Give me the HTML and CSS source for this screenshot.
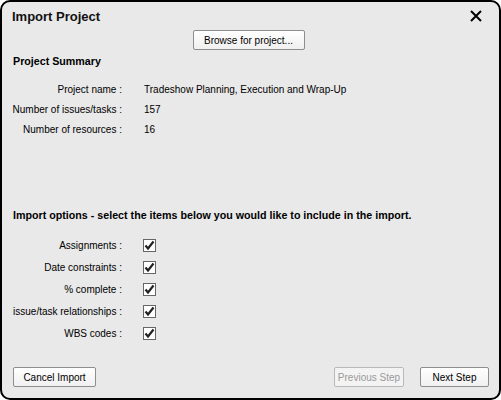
FILE: index.html
```html
<!DOCTYPE html>
<html>
<head>
<meta charset="utf-8">
<link rel="stylesheet" href="styles.css">
</head>
<body>
<div class="dialog">
  <div class="header">
    <div class="title">Import Project</div>
    <svg class="close" width="12" height="12" viewBox="0 0 12 12"><path d="M1 1L11 11M11 1L1 11" stroke="#000" stroke-width="2" fill="none"/></svg>
  </div>
  <div class="browse-row"><button class="btn browse">Browse for project...</button></div>
  <div class="section-title">Project Summary</div>
  <div class="rows">
    <div class="row"><span class="label">Project name :</span><span class="value">Tradeshow Planning, Execution and Wrap-Up</span></div>
    <div class="row"><span class="label">Number of issues/tasks :</span><span class="value">157</span></div>
    <div class="row"><span class="label">Number of resources :</span><span class="value">16</span></div>
  </div>
  <div class="section-title options-title">Import options - select the items below you would like to include in the import.</div>
  <div class="checks">
    <div class="crow"><span class="label">Assignments :</span><span class="cb"><svg width="11" height="11" viewBox="0 0 11 11"><path d="M1.5 5.5L4 8.5L9.5 1.5" stroke="#222" stroke-width="2.2" fill="none"/></svg></span></div>
    <div class="crow"><span class="label">Date constraints :</span><span class="cb"><svg width="11" height="11" viewBox="0 0 11 11"><path d="M1.5 5.5L4 8.5L9.5 1.5" stroke="#222" stroke-width="2.2" fill="none"/></svg></span></div>
    <div class="crow"><span class="label">% complete :</span><span class="cb"><svg width="11" height="11" viewBox="0 0 11 11"><path d="M1.5 5.5L4 8.5L9.5 1.5" stroke="#222" stroke-width="2.2" fill="none"/></svg></span></div>
    <div class="crow"><span class="label">issue/task relationships :</span><span class="cb"><svg width="11" height="11" viewBox="0 0 11 11"><path d="M1.5 5.5L4 8.5L9.5 1.5" stroke="#222" stroke-width="2.2" fill="none"/></svg></span></div>
    <div class="crow"><span class="label">WBS codes :</span><span class="cb"><svg width="11" height="11" viewBox="0 0 11 11"><path d="M1.5 5.5L4 8.5L9.5 1.5" stroke="#222" stroke-width="2.2" fill="none"/></svg></span></div>
  </div>
  <div class="footer">
    <button class="btn cancel">Cancel Import</button>
    <div class="nav">
      <button class="btn prev" disabled>Previous Step</button>
      <button class="btn next">Next Step</button>
    </div>
  </div>
</div>
</body>
</html>
```
FILE: styles.css
```css
html, body {
  margin: 0;
  padding: 0;
  background: #ffffff;
}
body {
  font-family: "Liberation Sans", Arial, sans-serif;
  font-size: 10px;
  color: #000;
}
.dialog {
  width: 501px;
  height: 400px;
  box-sizing: border-box;
  border: 2px solid #000;
  border-radius: 10px;
  background: #e9e9e9;
  display: flex;
  flex-direction: column;
}
.header {
  height: 28px;
  display: flex;
  align-items: center;
  justify-content: space-between;
  padding: 0 17px 0 10px;
}
.title {
  font-weight: bold;
  font-size: 13px;
  color: #111;
}
.close {
  display: block;
}
.browse-row {
  display: flex;
  justify-content: center;
  padding-right: 4px;
}
.btn {
  font-family: "Liberation Sans", Arial, sans-serif;
  font-size: 10px;
  color: #000;
  height: 20px;
  padding: 0;
  white-space: nowrap;
  background: linear-gradient(#ffffff, #f0f0f0);
  border: 1px solid #8e8e8e;
  border-radius: 2px;
  box-sizing: border-box;
}
.btn:disabled {
  color: #9a9a9a;
  border-color: #b9b9b9;
  background: #f3f3f3;
}
.browse {
  width: 112px;
}
.section-title {
  font-weight: bold;
  font-size: 10.7px;
  height: 16px;
  line-height: 16px;
  margin-top: 3px;
  padding-left: 11px;
}
.rows {
  margin-top: 10px;
}
.row, .crow {
  display: flex;
  align-items: center;
  height: 20px;
}
.crow {
  height: 22px;
}
.label {
  width: 120px;
  box-sizing: border-box;
  text-align: right;
  white-space: nowrap;
  display: flex;
  justify-content: flex-end;
}
.value {
  margin-left: 22px;
}
.options-title {
  margin-top: 68px;
}
.checks {
  margin-top: 11px;
}
.cb {
  margin-left: 21px;
  width: 13px;
  height: 13px;
  box-sizing: border-box;
  border: 1px solid #666;
  background: #fff;
  display: flex;
  align-items: center;
  justify-content: center;
}
.cb svg {
  display: block;
}
.footer {
  margin-top: auto;
  margin-bottom: 11px;
  display: flex;
  justify-content: space-between;
  padding: 0 10px 0 11px;
}
.cancel {
  width: 83px;
}
.nav {
  display: flex;
  gap: 16px;
}
.prev {
  width: 70px;
}
.next {
  width: 69px;
}
```
